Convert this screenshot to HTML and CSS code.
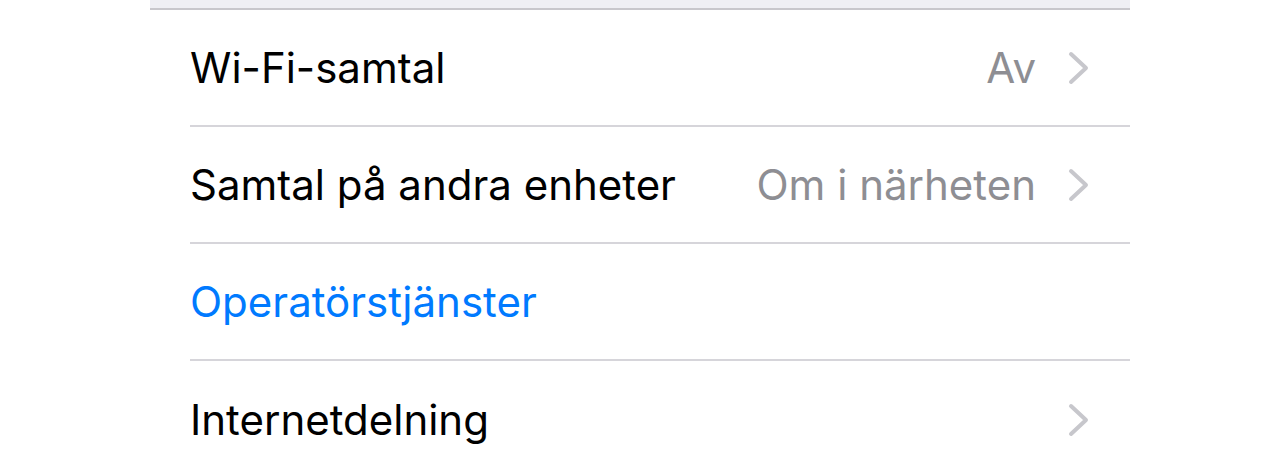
FILE: index.html
```html
<!DOCTYPE html>
<html lang="sv">
<head>
    <meta charset="UTF-8">
    <meta name="viewport" content="width=device-width, initial-scale=1.0">
    <title>Telefon</title>
    <link rel="stylesheet" href="styles.css">
</head>
<body>
    <div class="group-gap"></div>

    <ul class="cell-list">
        <li class="cell">
            <span class="cell-title">Wi-Fi-samtal</span>
            <span class="cell-value">Av</span>
            <svg class="chevron" viewBox="0 0 22 34"><path d="M3 3 L18 17 L3 31"/></svg>
        </li>
        <li class="cell">
            <span class="cell-title">Samtal på andra enheter</span>
            <span class="cell-value">Om i närheten</span>
            <svg class="chevron" viewBox="0 0 22 34"><path d="M3 3 L18 17 L3 31"/></svg>
        </li>
        <li class="cell">
            <span class="cell-title link">Operatörstjänster</span>
        </li>
        <li class="cell">
            <span class="cell-title">Internetdelning</span>
            <span class="cell-value"></span>
            <svg class="chevron" viewBox="0 0 22 34"><path d="M3 3 L18 17 L3 31"/></svg>
        </li>
    </ul>
</body>
</html>
```

FILE: styles.css
```css
* {
    margin: 0;
    padding: 0;
    box-sizing: border-box;
}

body {
    background-color: #ffffff;
    font-family: 'Inter', 'Noto Sans', sans-serif;
}

.group-gap {
    width: 980px;
    height: 10px;
    margin: 0 auto;
    background-color: #efeff4;
    border-bottom: 2px solid #c8c7cc;
}

.cell-list {
    list-style: none;
    width: 980px;
    margin: 0 auto;
}

.cell {
    display: flex;
    align-items: center;
    height: 117px;
    margin-left: 40px;
    padding-right: 40px;
    border-bottom: 2px solid #d6d5da;
}

.cell:last-child {
    border-bottom: none;
}

.cell-title {
    flex: 1;
    font-size: 42px;
    color: #000000;
}

.cell-title.link {
    color: #007aff;
}

.cell-value {
    font-size: 42px;
    color: #8e8e93;
    margin-right: 32px;
}

.chevron {
    width: 22px;
    height: 34px;
    fill: none;
    stroke: #c7c7cc;
    stroke-width: 4;
    stroke-linecap: round;
    stroke-linejoin: round;
}
```
